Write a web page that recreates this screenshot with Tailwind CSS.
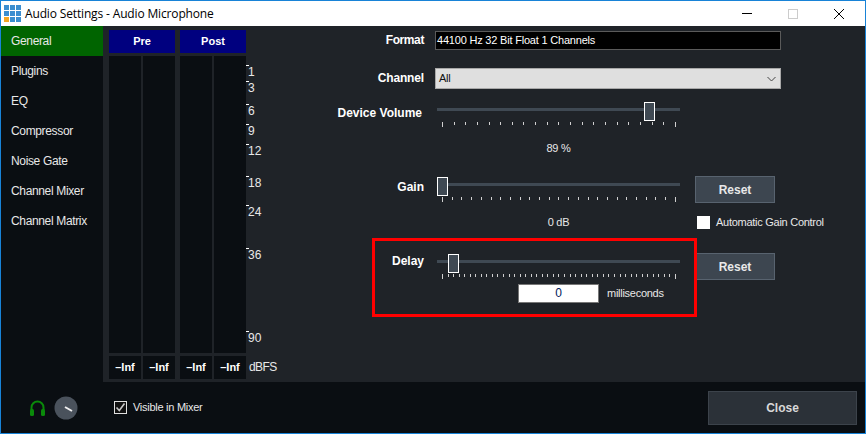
<!DOCTYPE html>
<html lang="en">

<head>
    <meta charset="UTF-8">
    <title>Audio Settings - Audio Microphone</title>
    <script src="https://cdn.jsdelivr.net/npm/@tailwindcss/browser@4"></script>
</head>

<body class="bg-[#0a0e12] overflow-hidden">
    <div class="relative w-[866px] h-[434px] flex flex-col border border-[#1883d7] font-['Liberation_Sans',sans-serif] text-[11px] tracking-[-0.27px] text-[#e8e8e8]">

        <!-- Title bar -->
        <div class="h-[25px] shrink-0 bg-white flex items-center text-black">
            <svg class="ml-[3px] mr-[4px]" width="17" height="17" viewBox="0 0 17 17">
                <rect x="0" y="0" width="5" height="5" fill="#3b8ed0" />
                <rect x="6" y="0" width="5" height="5" fill="#3b8ed0" />
                <rect x="12" y="0" width="5" height="5" fill="#3b8ed0" />
                <rect x="0" y="6" width="5" height="5" fill="#3b8ed0" />
                <rect x="6" y="6" width="5" height="5" fill="#3b8ed0" />
                <rect x="12" y="6" width="5" height="5" fill="#3b8ed0" />
                <rect x="0" y="12" width="5" height="5" fill="#f5a623" />
                <rect x="6" y="12" width="5" height="5" fill="#3b8ed0" />
                <rect x="12" y="12" width="5" height="5" fill="#3b8ed0" />
            </svg>
            <span class="font-['Open_Sans',sans-serif] text-[12px] tracking-[-0.15px]">Audio Settings - Audio Microphone</span>
            <div class="ml-auto flex items-center">
                <div class="w-[46px] flex justify-center"><div class="w-[10px] h-px bg-black"></div></div>
                <div class="w-[46px] flex justify-center"><div class="w-[10px] h-[10px] border border-[#cccccc]"></div></div>
                <div class="w-[46px] flex justify-center mr-[3px]">
                    <svg width="10" height="10" viewBox="0 0 10 10"><path d="M0 0L10 10M10 0L0 10" stroke="#000" stroke-width="1" /></svg>
                </div>
            </div>
        </div>

        <div class="flex h-[356px] shrink-0">
            <!-- Sidebar -->
            <div class="w-[102px] shrink-0 flex flex-col text-[12px] tracking-[-0.35px]">
                <div class="h-[30px] pl-[10px] flex items-center bg-[#006400]">General</div>
                <div class="h-[30px] pl-[10px] flex items-center">Plugins</div>
                <div class="h-[30px] pl-[10px] flex items-center">EQ</div>
                <div class="h-[30px] pl-[10px] flex items-center">Compressor</div>
                <div class="h-[30px] pl-[10px] flex items-center">Noise Gate</div>
                <div class="h-[30px] pl-[10px] flex items-center">Channel Mixer</div>
                <div class="h-[30px] pl-[10px] flex items-center">Channel Matrix</div>
            </div>

            <!-- Panel -->
            <div class="flex-1 bg-[#1f2328] flex">
                <!-- Meters -->
                <div class="w-[137px] ml-[6px] mt-[4px] shrink-0 flex gap-[5px]">
                    <div class="w-[66px] flex flex-col">
                        <div class="h-[23px] bg-[#00007f] flex items-center justify-center font-bold text-[11px] tracking-normal text-white">Pre</div>
                        <div class="h-[297px] mt-[3px] flex gap-[2px]">
                            <div class="flex-1 bg-[#0a0e12]"></div>
                            <div class="flex-1 bg-[#0a0e12]"></div>
                        </div>
                        <div class="h-[23px] mt-[3px] flex gap-[2px] font-bold text-[11px] tracking-normal text-white">
                            <div class="flex-1 bg-[#0a0e12] flex items-center justify-center">–Inf</div>
                            <div class="flex-1 bg-[#0a0e12] flex items-center justify-center">–Inf</div>
                        </div>
                    </div>
                    <div class="w-[66px] flex flex-col">
                        <div class="h-[23px] bg-[#00007f] flex items-center justify-center font-bold text-[11px] tracking-normal text-white">Post</div>
                        <div class="h-[297px] mt-[3px] flex gap-[2px]">
                            <div class="flex-1 bg-[#0a0e12]"></div>
                            <div class="flex-1 bg-[#0a0e12]"></div>
                        </div>
                        <div class="h-[23px] mt-[3px] flex gap-[2px] font-bold text-[11px] tracking-normal text-white">
                            <div class="flex-1 bg-[#0a0e12] flex items-center justify-center">–Inf</div>
                            <div class="flex-1 bg-[#0a0e12] flex items-center justify-center">–Inf</div>
                        </div>
                    </div>
                </div>

                <!-- dB scale -->
                <div id="scale" class="relative w-[30px] shrink-0 text-[12px] tracking-normal">
                    <span class="absolute left-[3px] top-[333px] leading-[16px] tracking-[-0.6px]">dBFS</span>
                </div>

                <!-- Settings -->
                <div class="w-[589px] shrink-0 pt-[5px] flex flex-col">
                    <div class="flex h-[19px]">
                        <div class="w-[148px] text-right font-bold text-[12px] tracking-[-0.4px] text-white leading-[19px]">Format</div>
                        <div class="ml-[11px] w-[346px] bg-black border border-[#5a5a5a] pl-[1px] leading-[17px] tracking-[-0.2px] text-white">44100 Hz 32 Bit Float 1 Channels</div>
                    </div>

                    <div class="flex h-[21px] mt-[18px]">
                        <div class="w-[148px] text-right font-bold text-[12px] tracking-[-0.15px] text-white leading-[21px]">Channel</div>
                        <div class="ml-[11px] w-[346px] bg-[#dfdfdf] border border-[#a8a8a8] pl-[3px] pr-[4px] flex items-center justify-between text-[#111]">
                            <span>All</span>
                            <svg width="9" height="6" viewBox="0 0 9 6"><path d="M0.5 1L4.5 5L8.5 1" fill="none" stroke="#444" /></svg>
                        </div>
                    </div>

                    <div class="flex h-[25px] mt-[13px]">
                        <div class="w-[146px] text-right font-bold text-[12px] tracking-normal text-white leading-[22px]">Device Volume</div>
                        <div class="slider relative ml-[15px] w-[243px]" data-ticks="20">
                            <div class="absolute top-[6px] left-0 w-[243px] h-[3px] bg-[#3f4953]"></div>
                            <div class="absolute top-0 left-[207px] w-[11px] h-[19px] bg-[#3f4953] border border-white"></div>
                        </div>
                    </div>

                    <div class="ml-[161px] w-[243px] h-[16px] mt-[13px] text-center leading-[16px]">89 %</div>

                    <div class="flex h-[27px] mt-[20px]">
                        <div class="w-[148px] text-right font-bold text-[12px] tracking-normal text-white leading-[22px]">Gain</div>
                        <div class="slider relative ml-[13px] mt-px w-[243px]" data-ticks="24">
                            <div class="absolute top-[6px] left-0 w-[243px] h-[3px] bg-[#3f4953]"></div>
                            <div class="absolute top-0 left-0 w-[11px] h-[19px] bg-[#3f4953] border border-white"></div>
                        </div>
                        <button class="ml-[15px] w-[80px] h-[27px] bg-[#3d4650] border border-[#58636f] font-bold text-[12px] tracking-normal text-[#e8e8e8]">Reset</button>
                    </div>

                    <div class="flex h-[16px] mt-[11px]">
                        <div class="ml-[161px] w-[243px] text-center leading-[16px]">0 dB</div>
                        <div class="ml-[17px] flex items-center">
                            <div class="w-[13px] h-[13px] bg-white"></div>
                            <span class="ml-[6px]">Automatic Gain Control</span>
                        </div>
                    </div>

                    <div class="flex h-[27px] mt-[23px]">
                        <div class="w-[148px] text-right font-bold text-[12px] tracking-normal text-white leading-[16px]">Delay</div>
                        <div class="slider relative ml-[13px] mt-px w-[243px]" data-ticks="42">
                            <div class="absolute top-[6px] left-0 w-[243px] h-[3px] bg-[#3f4953]"></div>
                            <div class="absolute top-0 left-[11px] w-[11px] h-[19px] bg-[#3f4953] border border-white"></div>
                        </div>
                        <button class="ml-[15px] w-[80px] h-[27px] bg-[#3d4650] border border-[#58636f] font-bold text-[12px] tracking-normal text-[#e8e8e8]">Reset</button>
                    </div>

                    <div class="flex h-[19px] mt-[4px] ml-[242px] items-center">
                        <div class="w-[81px] h-[19px] bg-white border border-[#777] text-center text-[#00205b] text-[12px] leading-[17px]">0</div>
                        <span class="ml-[8px]">milliseconds</span>
                    </div>
                </div>
            </div>
        </div>

        <!-- Footer -->
        <div class="flex-1 flex items-center">
            <svg class="ml-[29px]" width="15" height="16" viewBox="0 0 15 16">
                <path d="M1.5 10V7.5a6 6 0 0 1 12 0V10" fill="none" stroke="#0a8a0a" stroke-width="2" />
                <rect x="0" y="9" width="4" height="7" rx="1.5" fill="#0a8a0a" />
                <rect x="11" y="9" width="4" height="7" rx="1.5" fill="#0a8a0a" />
            </svg>
            <svg class="ml-[9px]" width="24" height="24" viewBox="0 0 24 24">
                <circle cx="12" cy="12" r="11.5" fill="#4a525c" />
                <path d="M11 11L18 15" stroke="#f0f0f0" stroke-width="2" />
            </svg>
            <div class="ml-[36px] w-[13px] h-[13px] border border-[#e0e0e0] bg-[#111] flex items-center justify-center">
                <svg width="11" height="11" viewBox="0 0 11 11"><path d="M1.5 5.5L4.3 8.5L9.5 1.5" fill="none" stroke="#c8c8c8" stroke-width="1.6" /></svg>
            </div>
            <span class="ml-[6px]">Visible in Mixer</span>
            <button class="ml-auto mr-[8px] w-[149px] h-[34px] bg-[#2b3138] border border-[#3c434b] font-bold text-[12px] tracking-normal text-[#d8d8d8]">Close</button>
        </div>

        <!-- Highlight drawn over the screenshot -->
        <div class="absolute left-[371px] top-[237px] w-[325px] h-[79px] border-[3px] border-[#ff0000]"></div>
    </div>

    <script>
        // slider tick marks
        document.querySelectorAll('.slider').forEach((slider) => {
            const count = Number(slider.dataset.ticks);
            const row = document.createElement('div');
            row.className = 'absolute top-[20px] left-[5px] w-[234px] flex justify-between items-start';
            for (let i = 0; i <= count; i++) {
                const tick = document.createElement('div');
                tick.className = (i === 0 || i === count) ? 'w-px h-[5px] bg-[#d0d0d0]' : 'w-px h-[3px] bg-[#d0d0d0]';
                row.appendChild(tick);
            }
            slider.appendChild(row);
        });

        // dB scale, top is the tick's offset inside the panel
        const scale = document.getElementById('scale');
        [['1', 39], ['3', 55], ['6', 78], ['9', 98], ['12', 118], ['18', 150], ['24', 179], ['36', 222], ['90', 305]].forEach(([label, top]) => {
            const mark = document.createElement('div');
            mark.className = 'absolute left-0 w-[3px] h-px bg-white';
            mark.style.top = top + 'px';
            const text = document.createElement('span');
            text.className = 'absolute left-[2px] leading-[14px]';
            text.style.top = top + 'px';
            text.textContent = label;
            scale.append(mark, text);
        });
    </script>
</body>

</html>
